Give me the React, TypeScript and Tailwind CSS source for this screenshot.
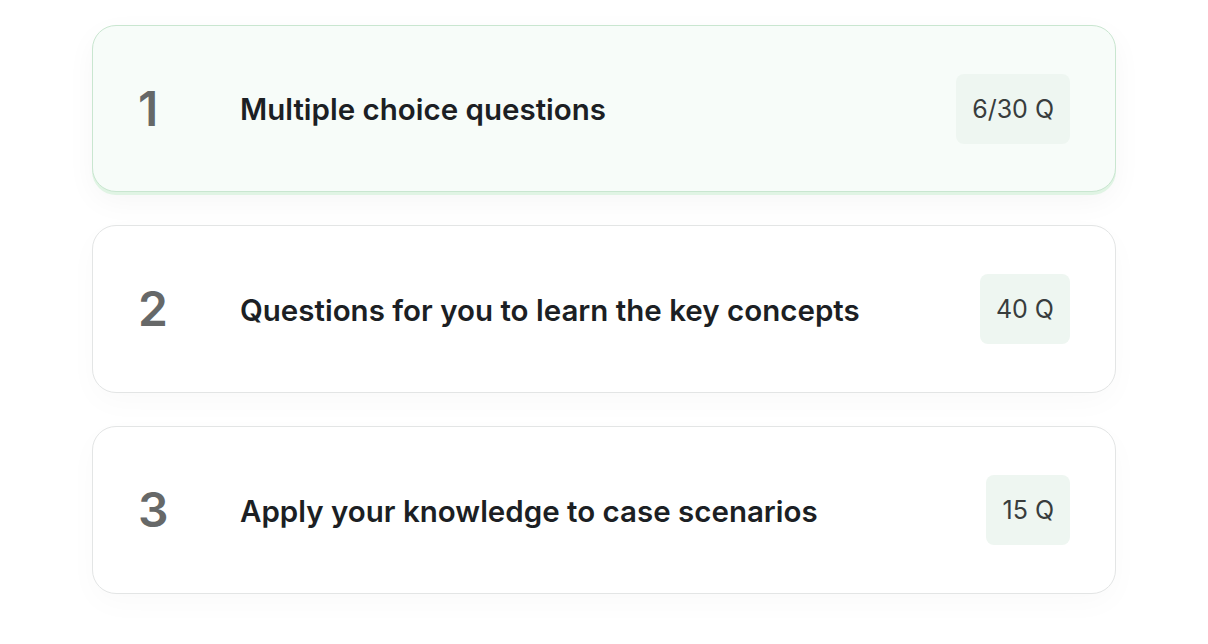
import React from "react";

const items = [
  { n: "1", title: "Multiple choice questions", badge: "6/30 Q", active: true },
  { n: "2", title: "Questions for you to learn the key concepts", badge: "40 Q", active: false },
  { n: "3", title: "Apply your knowledge to case scenarios", badge: "15 Q", active: false },
];

export default function App() {
  return (
    <div
      className="min-h-[644px] w-full bg-white pt-[25px]"
      style={{ fontFamily: "Inter, 'Noto Sans', sans-serif" }}
    >
      <div className="mx-auto flex w-[1024px] flex-col gap-[33px]">
        {items.map((it) => (
          <div
            key={it.n}
            className={
              it.active
                ? "flex h-[167px] items-center rounded-[24px] border border-[#c9e6d0] bg-[#f7fcf9] pl-[45px] pr-[45px] shadow-[0_3px_0_#e0f4e4,0_10px_30px_rgba(0,0,0,0.04)]"
                : "flex h-[168px] items-center rounded-[24px] border border-[#e3e5e5] bg-white pl-[45px] pr-[45px] shadow-[0_10px_30px_rgba(0,0,0,0.025)]"
            }
          >
            <div className="w-[102px] shrink-0 text-[48px] font-semibold leading-none text-[#666868]">
              {it.n}
            </div>
            <div className="flex-1 pt-[3px] text-[29.5px] font-semibold leading-none text-[#1c1f24]">
              {it.title}
            </div>
            <div className="rounded-[8px] bg-[#eef6f1] px-[16px] py-[20px] text-[25px] leading-[30px] text-[#383d3d]">
              {it.badge}
            </div>
          </div>
        ))}
      </div>
    </div>
  );
}
